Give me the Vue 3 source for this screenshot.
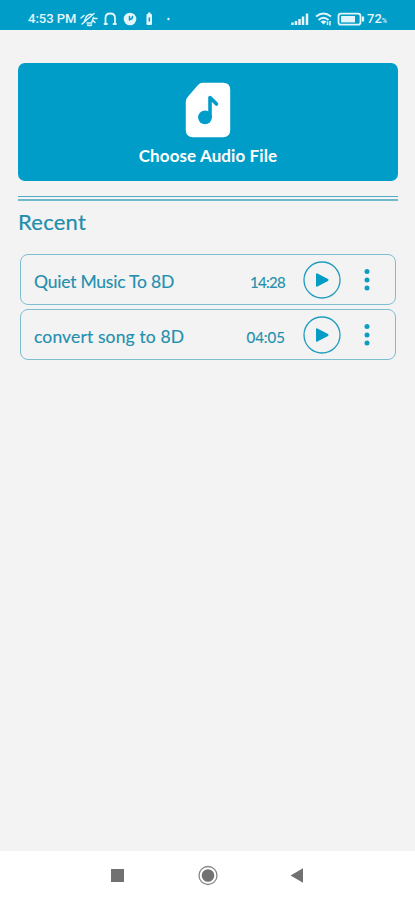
<script setup>
const tracks = [
  { title: 'Quiet Music To 8D', time: '14:28', cls: 'quiet' },
  { title: 'convert song to 8D', time: '04:05', cls: 'song' },
]
</script>

<template>
  <div class="screen">
    <header class="status">
      <span class="clock">4:53 PM</span>
      <svg class="notices" width="98" height="18" viewBox="0 0 98 18" fill="none" stroke="#e3f5fa" stroke-width="1.5" stroke-linecap="round">
        <path d="M5 12.500L7.500 6.500Q10 3.500 12.500 4.500M14.500 7.500L12.500 13H8M8.500 15Q10.500 16 12.500 15M3 14L15 3.500M2 8L5 5.500M15.500 8.500H18M14.500 11L16 12.500" />
        <path d="M26.500 14V8Q26.500 3.500 31.300 3.500Q36 3.500 36 8V14M25.500 14H28M34.500 14H37" stroke-width="1.800" />
        <circle cx="51" cy="9" r="6.300" fill="#e3f5fa" stroke="none" />
        <path d="M50.500 10V6.500M50.500 9.500Q53.500 9.500 53.500 6.500" stroke="#009dc9" stroke-width="1.500" />
        <rect x="67.500" y="4" width="5.500" height="11" rx="1" fill="#e3f5fa" stroke="none" />
        <path d="M69.500 3.300H71" />
        <path d="M70.300 8V11" stroke="#009dc9" stroke-width="1.500" />
        <circle cx="89.500" cy="9" r="1.200" fill="#e3f5fa" stroke="none" />
      </svg>
      <svg class="signals" width="75" height="18" viewBox="0 0 75 18" fill="none" stroke="#e3f5fa">
        <path d="M2.500 15V12.500M6 15V11M9.500 15V9M13 15V6.500M17 15V3.500" stroke-width="2.500" />
        <path d="M26 6.500Q33.500 .500 41 6.500M28.500 10Q33.500 5.500 38.500 10" stroke-width="1.900" />
        <path d="M30.500 11.500Q33.500 9.500 36.500 11.500L33.500 14.500Z" fill="#e3f5fa" stroke="none" />
        <path d="M37.500 11.500V15M40 11V15.500" stroke-width="1.500" />
        <rect x="48.500" y="3.700" width="22" height="11" rx="2.500" stroke-width="1.800" />
        <rect x="51" y="6" width="14" height="6.400" fill="#e3f5fa" stroke="none" />
        <path d="M73 6.500V11.500" stroke-width="2.200" />
      </svg>
      <span class="level">72<small>%</small></span>
    </header>

    <main>
      <button class="choose">
        <svg width="46" height="56" viewBox="0 0 46 56">
          <path d="M17.500 .800H38Q45.200 .800 45.200 8V48Q45.200 55.200 38 55.200H8Q.800 55.200 .800 48V20Q.800 16.500 3.500 14L13 3Q15 .800 17.500 .800Z" fill="#fff" />
          <circle cx="20" cy="35.300" r="6.900" fill="#009dc9" />
          <path d="M25 35V15.500L31.500 22" fill="none" stroke="#009dc9" stroke-width="3.600" stroke-linecap="round" stroke-linejoin="round" />
        </svg>
        <span>Choose Audio File</span>
      </button>
      <div class="divider"></div>
      <h1>Recent</h1>
      <ul>
        <li v-for="t in tracks" :key="t.title">
          <span class="title" :class="t.cls">{{ t.title }}</span>
          <span class="time" :class="t.cls">{{ t.time }}</span>
          <svg class="play" width="38" height="38" viewBox="0 0 38 38">
            <circle cx="19" cy="19" r="18" fill="none" stroke="#219dc0" stroke-width="1.300" />
            <path d="M14 13.300L24.500 19L14 24.700Z" fill="#079cc6" stroke="#079cc6" stroke-width="2" stroke-linejoin="round" />
          </svg>
          <svg class="more" width="6" height="24" viewBox="0 0 6 24" fill="#109bc2">
            <circle cx="3" cy="3.500" r="2.500" /><circle cx="3" cy="12" r="2.500" /><circle cx="3" cy="20" r="2.500" />
          </svg>
        </li>
      </ul>
    </main>

    <nav>
      <svg width="415" height="49" viewBox="0 0 415 49">
        <rect x="111" y="18" width="13" height="13" fill="#717171" />
        <circle cx="208" cy="24.500" r="9" fill="none" stroke="#858585" stroke-width="1.300" />
        <circle cx="208" cy="24.500" r="6.300" fill="#717171" />
        <path d="M290.500 24.500L303 17.300V31.700Z" fill="#717171" />
      </svg>
    </nav>
  </div>
</template>

<style>
body { margin: 0; }
</style>

<style scoped>
.screen { width: 415px; height: 900px; display: flex; flex-direction: column; background: #f3f3f3; font-family: Lato, "Open Sans", sans-serif; overflow: hidden; }
.status { height: 30px; box-sizing: border-box; padding: 10px 0 0 28px; display: flex; background: #009dc9; color: #e3f5fa; font: 500 13px/18px Roboto, sans-serif; flex: none; }
.clock { width: 50px; white-space: nowrap; }
.notices { margin-left: 1px; flex: none; }
.signals { margin-left: 113px; flex: none; }
.level { margin-left: 2px; white-space: nowrap; }
.level small { font-size: 7px; }
main { flex: 1; padding: 33px 17px 0 18px; }
.choose { width: 100%; height: 118px; box-sizing: border-box; padding: 19px 0 0; display: flex; flex-direction: column; align-items: center; border: 0; border-radius: 7px; background: #009dc9; color: #fff; font: 700 17px/22px Lato, sans-serif; letter-spacing: .1px; }
.choose svg { flex: none; }
.choose span { margin-top: 7px; white-space: nowrap; }
.divider { height: 2px; margin-top: 15px; border-top: 1px solid #50adc6; border-bottom: 2px solid #70bacd; }
h1 { margin: 5px 0 0; color: #218ead; font: 400 22px/32px Lato, sans-serif; letter-spacing: .25px; -webkit-text-stroke: .2px #218ead; }
ul { list-style: none; margin: 16px 2px 0; padding: 0; display: grid; gap: 4px; }
li { height: 51px; box-sizing: border-box; display: flex; align-items: center; border: 1px solid #7dbfd1; border-radius: 8px; padding: 0 25px 0 13px; color: #238fae; -webkit-text-stroke: .15px #238fae; }
.title { flex: 1; padding-top: 3px; font-size: 17.500px; white-space: nowrap; }
.title.quiet { letter-spacing: -.22px; }
.title.song { letter-spacing: .13px; }
.time { font-size: 15px; padding-top: 4px; }
.time.quiet { letter-spacing: -.7px; }
.play { margin-left: 18px; }
.more { margin-left: 23px; }
nav { height: 49px; background: #fff; flex: none; }
nav svg { display: block; }
</style>
